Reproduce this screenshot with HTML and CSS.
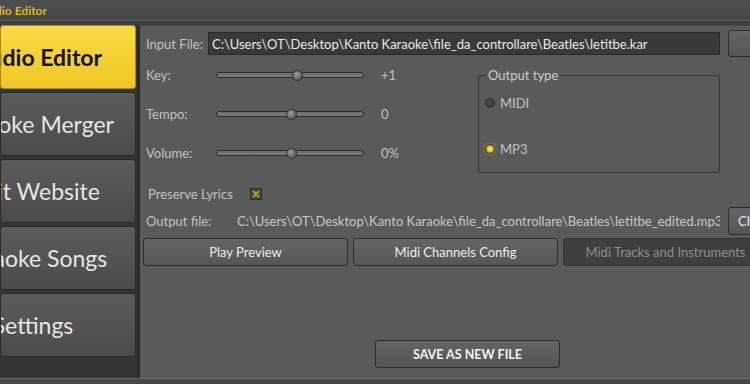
FILE: index.html
```html
<!DOCTYPE html>
<html lang="en">
<head>
    <meta charset="UTF-8">
    <title>Audio Editor</title>
    <link rel="stylesheet" href="styles.css">
</head>

<body>
<div class="app_window">
    <div class="title_bar">
        <div class="title_text"><span>Audio Editor</span></div>
    </div>

    <div class="app_frame">
        <div class="side_nav">
            <div class="nav_btn active"><span>Audio Editor</span></div>
            <div class="nav_btn"><span>Karaoke Merger</span></div>
            <div class="nav_btn"><span>Visit Website</span></div>
            <div class="nav_btn"><span>Karaoke Songs</span></div>
            <div class="nav_btn"><span>Settings</span></div>
        </div>

        <div class="edit_panel">
            <div class="file_row">
                <label class="file_label">Input File:</label>
                <div class="path_input">C:\Users\OT\Desktop\Kanto Karaoke\file_da_controllare\Beatles\letitbe.kar</div>
                <div class="small_btn browse_btn">Browse</div>
            </div>

            <div class="mid_block">
                <div class="slider_list">
                    <div class="slider_row">
                        <span class="slider_label">Key:</span>
                        <div class="track"><div class="thumb" style="left: 55%"></div></div>
                        <span class="slider_value">+1</span>
                    </div>
                    <div class="slider_row">
                        <span class="slider_label">Tempo:</span>
                        <div class="track"><div class="thumb" style="left: 51%"></div></div>
                        <span class="slider_value">0</span>
                    </div>
                    <div class="slider_row">
                        <span class="slider_label">Volume:</span>
                        <div class="track"><div class="thumb" style="left: 51%"></div></div>
                        <span class="slider_value">0%</span>
                    </div>
                </div>

                <fieldset class="output_group">
                    <legend>Output type</legend>
                    <div class="radio_row first">
                        <span class="radio"></span>
                        <span>MIDI</span>
                    </div>
                    <div class="radio_row">
                        <span class="radio on"></span>
                        <span>MP3</span>
                    </div>
                </fieldset>
            </div>

            <div class="preserve_row">
                <span class="preserve_label">Preserve Lyrics</span>
                <span class="check_box">
                    <svg width="8" height="8" viewBox="0 0 8 8">
                        <path d="M1.5 1.5 L6.5 6.5 M6.5 1.5 L1.5 6.5" stroke="#d6bd3c" stroke-width="1.4" stroke-linecap="round"/>
                    </svg>
                </span>
            </div>

            <div class="file_row out_row">
                <label class="out_label">Output file:</label>
                <div class="out_path">C:\Users\OT\Desktop\Kanto Karaoke\file_da_controllare\Beatles\letitbe_edited.mp3</div>
                <div class="small_btn">Change</div>
            </div>

            <div class="btn_row">
                <div class="btn">Play Preview</div>
                <div class="btn">Midi Channels Config</div>
                <div class="btn disabled">Midi Tracks and Instruments</div>
            </div>

            <div class="save_btn">SAVE AS NEW FILE</div>
        </div>
    </div>

    <div class="status_bar"></div>
</div>
</body>
</html>
```

FILE: styles.css
```css
*{
    box-sizing: border-box;
}
body{
    margin: 0;
    width: 750px;
    height: 384px;
    overflow: hidden;
    background: #3b3b3b;
    font-family: Lato, "Liberation Sans", sans-serif;
    font-size: 13px;
    color: #c2c2c2;
}
.app_window{
    height: 384px;
    display: flex;
    flex-direction: column;
}

/*标题栏*/
.title_bar{
    height: 21px;
    flex: none;
    display: flex;
    align-items: center;
    background: linear-gradient(#4f4f4f, #474747);
    border-bottom: 1px solid #5a5a5a;
}
.title_text{
    width: 47px;
    display: flex;
    justify-content: flex-end;
    overflow: hidden;
    white-space: nowrap;
    color: #dcb622;
    font-weight: bold;
    font-size: 12px;
}

.app_frame{
    flex: 1;
    min-height: 0;
    display: flex;
    padding-top: 4px;
    background: #3c3c3c;
}

/*左侧菜单*/
.side_nav{
    width: 137px;
    flex: none;
    padding-right: 1px;
    display: flex;
    flex-direction: column;
    gap: 3px;
    background: #353535;
}
.nav_btn{
    height: 64px;
    flex: none;
    display: flex;
    align-items: center;
    justify-content: center;
    padding-right: 70px;
    overflow: hidden;
    white-space: nowrap;
    background: linear-gradient(#5b5b5b, #4b4b4b);
    border: 1px solid #2a2a2a;
    border-radius: 3px;
    color: #e6e6e6;
    font-size: 23px;
}
.nav_btn.active{
    padding-right: 60px;
    background: linear-gradient(#f9db47, #efc722);
    border-color: #a8891a;
    color: #151515;
    font-weight: bold;
}

/*右侧面板*/
.edit_panel{
    flex: 1;
    background: #5a5a5a;
    border-left: 3px solid #2a2a2a;
    border-top: 1px solid #4a4a4a;
    padding: 4px 0 0 6px;
    white-space: nowrap;
}
.file_row{
    height: 27px;
    display: flex;
    align-items: center;
}
.file_label{
    width: 62px;
    flex: none;
}
.path_input{
    width: 512px;
    height: 23px;
    flex: none;
    display: flex;
    align-items: center;
    padding-left: 3px;
    overflow: hidden;
    background: #393939;
    border: 1px solid #2a2a2a;
    color: #e8e8e8;
}
.small_btn{
    width: 70px;
    height: 27px;
    flex: none;
    margin-left: 8px;
    display: flex;
    align-items: center;
    padding-left: 9px;
    background: linear-gradient(#646464, #565656);
    border: 1px solid #2e2e2e;
    border-radius: 3px;
    color: #e6e6e6;
}
/*按钮文字在窗口外*/
.browse_btn{
    padding-left: 26px;
}

.mid_block{
    display: flex;
}
.slider_list{
    width: 332px;
    flex: none;
    padding-top: 8px;
    display: flex;
    flex-direction: column;
    gap: 19px;
}
.slider_row{
    height: 20px;
    display: flex;
    align-items: center;
}
.slider_label{
    width: 70px;
    flex: none;
}
.track{
    position: relative;
    width: 148px;
    height: 6px;
    flex: none;
    border: 1px solid #2c2c2c;
    border-radius: 3px;
    background: linear-gradient(#6c6c6c, #7b7b7b);
}
.thumb{
    position: absolute;
    top: 50%;
    width: 11px;
    height: 11px;
    margin: -5.5px 0 0 -5.5px;
    border-radius: 50%;
    border: 1px solid #2e2e2e;
    background: radial-gradient(circle at 40% 35%, #9c9c9c, #5a5a5a 75%);
}
.slider_value{
    margin-left: 17px;
}

/*输出类型*/
.output_group{
    width: 242px;
    height: 106px;
    margin: 10px 0 0 0;
    padding: 0 0 0 6px;
    border: 1px solid #333333;
    border-radius: 3px;
}
.output_group legend{
    margin-left: 1px;
    padding: 0 2px;
    line-height: 16px;
    color: #cccccc;
}
.radio_row{
    height: 20px;
    display: flex;
    align-items: center;
    gap: 5px;
    margin-top: 26px;
}
.radio_row.first{
    margin-top: 10px;
}
.radio{
    width: 10px;
    height: 10px;
    border-radius: 50%;
    border: 1px solid #2e2e2e;
    background: radial-gradient(circle at 40% 35%, #4a4a4a, #353535);
}
.radio.on{
    border-color: #3d3a26;
    background: radial-gradient(circle, #fff59a 0, #f0d232 35%, #9c8020 80%);
    box-shadow: 0 0 3px #c9a826;
}

.preserve_row{
    height: 20px;
    margin-top: 11px;
    padding-left: 2px;
    display: flex;
    align-items: center;
}
.preserve_label{
    width: 102px;
    flex: none;
}
.check_box{
    width: 12px;
    height: 12px;
    display: flex;
    align-items: center;
    justify-content: center;
    background: #4d4a2d;
    border: 1px solid #2c2c2c;
}

.out_row{
    height: 28px;
    margin-top: 3px;
}
.out_label{
    width: 91px;
    flex: none;
}
.out_path{
    width: 483px;
    flex: none;
    overflow: hidden;
    color: #c8c8c8;
}
.out_row .small_btn{
    height: 28px;
}

.btn_row{
    margin: 3px 0 0 -3px;
    display: flex;
    gap: 5px;
}
.btn{
    width: 205px;
    height: 28px;
    flex: none;
    display: flex;
    align-items: center;
    justify-content: center;
    background: linear-gradient(#656565, #565656);
    border: 1px solid #2e2e2e;
    border-radius: 3px;
    color: #ececec;
}
.btn.disabled{
    background: #3f3f3f;
    border-color: #333333;
    color: #8e8e8e;
}

.save_btn{
    width: 185px;
    height: 28px;
    margin: 74px 0 0 229px;
    display: flex;
    align-items: center;
    justify-content: center;
    background: linear-gradient(#646464, #545454);
    border: 1px solid #2b2b2b;
    border-radius: 3px;
    color: #f2f2f2;
    font-weight: bold;
    font-size: 12.5px;
}

.status_bar{
    height: 6px;
    flex: none;
    background: #474747;
    border-top: 1px solid #6a6a6a;
}
```
